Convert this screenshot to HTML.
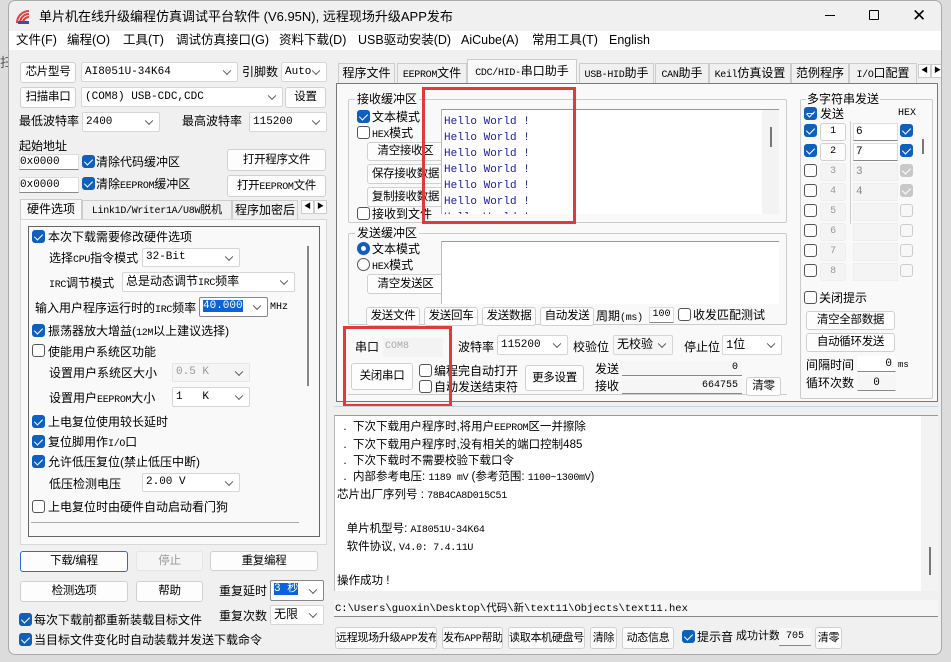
<!DOCTYPE html>
<html><head><meta charset="utf-8"><style>
*{box-sizing:border-box;margin:0;padding:0}
body{width:951px;height:662px;overflow:hidden;background:#dcdcdc;font:12px "Liberation Sans","Noto Sans CJK SC",sans-serif;color:#000;position:relative}
.a{position:absolute;white-space:nowrap;line-height:1}
.win{position:absolute;left:8px;top:0;width:934px;height:655px;background:#f0f0f0;border:1px solid #aaa;border-radius:7px;overflow:hidden}
.btn{position:absolute;background:#fdfdfd;border:1px solid #d0d0d0;border-radius:3px;text-align:center;white-space:nowrap;font-size:11.5px;letter-spacing:-0.3px;overflow:hidden}
.cmb{position:absolute;background:#fff;border:1px solid #d6d6d6;border-radius:2px;font:11px "Liberation Mono","Noto Sans CJK SC",monospace;padding-left:3px;white-space:nowrap}
.cmb:after{content:"";position:absolute;right:7px;top:50%;width:5px;height:5px;border-right:1px solid #555;border-bottom:1px solid #555;transform:translateY(-70%) rotate(45deg)}
.cb{position:absolute;width:13px;height:13px;border:1px solid #555;border-radius:3px;background:#fff}
.cb.on{background:#0f5fbd;border-color:#0f5fbd}
.cb.on:after{content:"";position:absolute;left:3px;top:1px;width:4px;height:7px;border-right:1.5px solid #fff;border-bottom:1.5px solid #fff;transform:rotate(45deg)}
.cb.dis{background:#c8c8c8;border-color:#c8c8c8}
.cb.dis:after{content:"";position:absolute;left:3px;top:1px;width:4px;height:7px;border-right:1.5px solid #fff;border-bottom:1.5px solid #fff;transform:rotate(45deg)}
.cb.lt{border-color:#ccc;background:#f7f7f7}
.inp{position:absolute;background:#fff;border:1px solid #ddd;border-bottom:1px solid #888;font:11px "Liberation Mono",monospace;white-space:nowrap}
.mono{font-family:"Liberation Mono","Noto Sans CJK SC",monospace}
i.m{font-style:normal;font-family:"Liberation Mono",monospace;font-size:10px;letter-spacing:-0.3px}
.grp{position:absolute;border:1px solid #c8d6e4;border-radius:2px}
.red{position:absolute;border:3px solid #e03a3a}
.tab{position:absolute;height:20px;border:1px solid #ccc;border-bottom:none;background:#f0f0f0;text-align:center;line-height:19px;white-space:nowrap;overflow:hidden}
</style></head><body>
<div class="a" style="left:0;top:56px;font-size:13px;color:#555">扫</div>
<div class="win">
 <svg class="a" style="left:6px;top:8px" width="16" height="16" viewBox="0 0 16 16"><path d="M2 14 A12 12 0 0 1 14 2" stroke="#e04040" stroke-width="2" fill="none"/><path d="M5 14 A9 9 0 0 1 14 5" stroke="#e04040" stroke-width="2" fill="none"/><path d="M8 14 A6 6 0 0 1 14 8" stroke="#e04040" stroke-width="2" fill="none"/><rect x="3" y="12" width="11" height="3" fill="#3050c0"/></svg>
 <div class="a" style="left:30px;top:9px;font-size:13px">单片机在线升级编程仿真调试平台软件 (V6.95N), 远程现场升级APP发布</div>
 <div class="a" style="left:816px;top:14px;width:10px;border-top:1px solid #000"></div>
 <div class="a" style="left:860px;top:9px;width:10px;height:10px;border:1px solid #000;border-radius:1px"></div>
 <div class="a" style="left:903px;top:6px;font-size:17px">✕</div>
 <div class="a" style="left:0;top:30px;width:934px;height:19px;background:#fff"></div>
 <div class="a" style="left:7px;top:33px;font-size:12.5px">文件(F)</div>
 <div class="a" style="left:58px;top:33px;font-size:12.5px">编程(O)</div>
 <div class="a" style="left:114px;top:33px;font-size:12.5px">工具(T)</div>
 <div class="a" style="left:167px;top:33px;font-size:12.5px">调试仿真接口(G)</div>
 <div class="a" style="left:270px;top:33px;font-size:12.5px">资料下载(D)</div>
 <div class="a" style="left:349px;top:33px;font-size:12.5px">USB驱动安装(D)</div>
 <div class="a" style="left:452px;top:33px;font-size:12.5px">AiCube(A)</div>
 <div class="a" style="left:523px;top:33px;font-size:12.5px">常用工具(T)</div>
 <div class="a" style="left:600px;top:33px;font-size:12.5px">English</div>

 <!-- LEFT -->
 <div class="btn" style="left:11px;top:61px;width:56px;height:21px;line-height:19px">芯片型号</div>
 <div class="cmb" style="left:72px;top:61px;width:157px;height:20px;line-height:18px">AI8051U-34K64</div>
 <div class="a" style="left:233px;top:65px">引脚数</div>
 <div class="cmb" style="left:272px;top:61px;width:46px;height:20px;line-height:18px">Auto</div>
 <div class="btn" style="left:11px;top:86px;width:56px;height:21px;line-height:19px">扫描串口</div>
 <div class="cmb" style="left:72px;top:86px;width:202px;height:20px;line-height:18px">(COM8) USB-CDC,CDC</div>
 <div class="btn" style="left:276px;top:86px;width:41px;height:21px;line-height:19px">设置</div>
 <div class="a" style="left:10px;top:114px">最低波特率</div>
 <div class="cmb" style="left:73px;top:111px;width:78px;height:20px;line-height:18px">2400</div>
 <div class="a" style="left:173px;top:114px">最高波特率</div>
 <div class="cmb" style="left:240px;top:111px;width:78px;height:20px;line-height:18px">115200</div>
 <div class="a" style="left:10px;top:139px">起始地址</div>
 <div class="inp" style="left:10px;top:153px;width:60px;height:16px;line-height:14px">0x0000</div>
 <div class="cb on" style="left:73px;top:154px"></div><div class="a" style="left:87px;top:155px">清除代码缓冲区</div>
 <div class="btn" style="left:218px;top:148px;width:99px;height:22px;line-height:20px">打开程序文件</div>
 <div class="inp" style="left:10px;top:176px;width:60px;height:16px;line-height:14px">0x0000</div>
 <div class="cb on" style="left:73px;top:176px"></div><div class="a" style="left:87px;top:177px">清除<i class="m">EEPROM</i>缓冲区</div>
 <div class="btn" style="left:218px;top:174px;width:99px;height:22px;line-height:20px">打开<i class="m">EEPROM</i>文件</div>
 <div class="tab" style="left:11px;top:198px;width:62px;background:#f9f9f9;height:21px">硬件选项</div>
 <div class="tab" style="left:73px;top:199px;width:150px;font-size:11px"><i class="m">Link1D/Writer1A/U8W</i>脱机</div>
 <div class="tab" style="left:223px;top:199px;width:66px">程序加密后</div>
 <div class="a" style="left:292px;top:199px;width:13px;height:14px;border:1px solid #ccc;background:#fff;font-size:7px;text-align:center;line-height:12px">◀</div>
 <div class="a" style="left:305px;top:199px;width:13px;height:14px;border:1px solid #ccc;background:#fff;font-size:7px;text-align:center;line-height:12px">▶</div>
 <div class="a" style="left:11px;top:218px;width:307px;height:326px;border:1px solid #d8d8d8;background:#f9f9f9"></div>
 <div class="a" style="left:19px;top:225px;width:292px;height:311px;border:1px solid #666"></div>
 <div class="a" style="left:298px;top:245px;width:2px;height:140px;background:#888"></div>
 <div class="cb on" style="left:23px;top:229px"></div><div class="a" style="left:39px;top:230px">本次下载需要修改硬件选项</div>
 <div class="a" style="left:40px;top:251px">选择<i class="m">CPU</i>指令模式</div>
 <div class="cmb" style="left:133px;top:247px;width:98px;height:19px;line-height:17px">32-Bit</div>
 <div class="a" style="left:40px;top:276px"><i class="m">IRC</i>调节模式</div>
 <div class="cmb" style="left:113px;top:271px;width:173px;height:20px;line-height:18px;font-size:12px">总是动态调节<i class="m">IRC</i>频率</div>
 <div class="a" style="left:26px;top:301px">输入用户程序运行时的<i class="m">IRC</i>频率</div>
 <div class="cmb" style="left:190px;top:296px;width:69px;height:20px;line-height:16px;border-color:#888"><span style="background:#0a64d8;color:#fff">40.000</span></div>
 <div class="a mono" style="left:261px;top:302px;font-size:10px">MHz</div>
 <div class="cb on" style="left:23px;top:323px"></div><div class="a" style="left:39px;top:324px">振荡器放大增益(<i class="m">12M</i>以上建议选择)</div>
 <div class="cb" style="left:23px;top:343px"></div><div class="a" style="left:39px;top:345px">使能用户系统区功能</div>
 <div class="a" style="left:40px;top:366px">设置用户系统区大小</div>
 <div class="cmb" style="left:163px;top:362px;width:78px;height:19px;line-height:17px;color:#999;background:#f5f5f5;border-color:#e6e6e6">0.5 K</div>
 <div class="a" style="left:40px;top:391px">设置用户<i class="m">EEPROM</i>大小</div>
 <div class="cmb" style="left:163px;top:386px;width:78px;height:20px;line-height:18px">1&nbsp;&nbsp;&nbsp;K</div>
 <div class="cb on" style="left:23px;top:414px"></div><div class="a" style="left:39px;top:415px">上电复位使用较长延时</div>
 <div class="cb on" style="left:23px;top:434px"></div><div class="a" style="left:39px;top:435px">复位脚用作<i class="m">I/O</i>口</div>
 <div class="cb on" style="left:23px;top:454px"></div><div class="a" style="left:39px;top:455px">允许低压复位(禁止低压中断)</div>
 <div class="a" style="left:40px;top:477px">低压检测电压</div>
 <div class="cmb" style="left:133px;top:472px;width:98px;height:19px;line-height:17px">2.00 V</div>
 <div class="cb" style="left:23px;top:499px"></div><div class="a" style="left:39px;top:500px">上电复位时由硬件自动启动看门狗</div>
 <div class="a" style="left:22px;top:521px;width:268px;border-top:1px solid #aaa"></div>
 <div class="btn" style="left:11px;top:550px;width:108px;height:21px;line-height:19px;border-color:#2a6fc9">下载/编程</div>
 <div class="btn" style="left:127px;top:550px;width:67px;height:20px;line-height:18px;color:#999;background:#f5f5f5;border-color:#e5e5e5">停止</div>
 <div class="btn" style="left:201px;top:550px;width:108px;height:20px;line-height:18px">重复编程</div>
 <div class="btn" style="left:11px;top:580px;width:108px;height:21px;line-height:19px">检测选项</div>
 <div class="btn" style="left:127px;top:580px;width:67px;height:21px;line-height:19px">帮助</div>
 <div class="a" style="left:210px;top:584px">重复延时</div>
 <div class="cmb" style="left:261px;top:579px;width:54px;height:21px;line-height:17px;border-color:#888"><span style="background:#0a64d8;color:#fff">3 秒</span></div>
 <div class="a" style="left:210px;top:609px">重复次数</div>
 <div class="cmb" style="left:261px;top:604px;width:54px;height:20px;line-height:18px;font-size:12px">无限</div>
 <div class="cb on" style="left:10px;top:612px"></div><div class="a" style="left:25px;top:613px">每次下载前都重新装载目标文件</div>
 <div class="cb on" style="left:10px;top:632px"></div><div class="a" style="left:25px;top:633px">当目标文件变化时自动装载并发送下载命令</div>

 <!-- RIGHT tabs -->
 <div class="tab" style="left:329px;top:62px;width:57px">程序文件</div>
 <div class="tab" style="left:388px;top:62px;width:70px"><i class="m">EEPROM</i>文件</div>
 <div class="tab" style="left:458px;top:58px;width:110px;height:25px;background:#f9f9f9;line-height:22px"><i class="m">CDC/HID-</i>串口助手</div>
 <div class="tab" style="left:570px;top:62px;width:75px"><i class="m">USB-HID</i>助手</div>
 <div class="tab" style="left:646px;top:62px;width:54px"><i class="m">CAN</i>助手</div>
 <div class="tab" style="left:700px;top:62px;width:82px"><i class="m">Keil</i>仿真设置</div>
 <div class="tab" style="left:782px;top:62px;width:58px">范例程序</div>
 <div class="tab" style="left:840px;top:62px;width:68px"><i class="m">I/O</i>口配置</div>
 <div class="a" style="left:909px;top:63px;width:13px;height:14px;border:1px solid #ccc;background:#fff;font-size:7px;text-align:center;line-height:12px">◀</div>
 <div class="a" style="left:922px;top:63px;width:13px;height:14px;border:1px solid #ccc;background:#fff;font-size:7px;text-align:center;line-height:12px">▶</div>
 <div class="a" style="left:327px;top:82px;width:602px;height:319px;border:1px solid #777;background:#f9f9f9"></div>
 <div class="grp" style="left:339px;top:98px;width:439px;height:124px;border-color:#ccc"></div>
 <div class="a" style="left:346px;top:92px;background:#f9f9f9;padding:0 2px">接收缓冲区</div>
 <div class="cb on" style="left:348px;top:109px"></div><div class="a" style="left:363px;top:110px">文本模式</div>
 <div class="cb" style="left:348px;top:125px"></div><div class="a" style="left:363px;top:126px"><i class="m">HEX</i>模式</div>
 <div class="btn" style="left:358px;top:141px;width:77px;height:19px;line-height:17px">清空接收区</div>
 <div class="btn" style="left:358px;top:163px;width:77px;height:20px;line-height:18px">保存接收数据</div>
 <div class="btn" style="left:358px;top:186px;width:77px;height:20px;line-height:18px">复制接收数据</div>
 <div class="cb" style="left:348px;top:206px"></div><div class="a" style="left:363px;top:207px">接收到文件</div>
 <div class="a" style="left:432px;top:108px;width:338px;height:105px;background:#fff;border-top:1px solid #999;border-left:1px solid #bbb;overflow:hidden">
  <div class="a mono" style="left:2px;top:4px;color:#1a1aa8;font-size:11px;line-height:16px;white-space:pre">Hello World !
Hello World !
Hello World !
Hello World !
Hello World !
Hello World !
Hello World !</div>
  <div class="a" style="left:320px;top:0;width:17px;height:105px;background:#f3f3f3"></div>
  <div class="a" style="left:328px;top:17px;width:2px;height:20px;background:#777"></div>
 </div>
 <div class="red" style="left:413px;top:86px;width:154px;height:137px"></div>
 <div class="grp" style="left:339px;top:232px;width:439px;height:92px;border-color:#ccc"></div>
 <div class="a" style="left:346px;top:226px;background:#f9f9f9;padding:0 2px">发送缓冲区</div>
 <div class="a" style="left:348px;top:241px;width:13px;height:13px;border-radius:50%;background:#0f5fbd"><div style="position:absolute;left:4px;top:4px;width:5px;height:5px;border-radius:50%;background:#fff"></div></div>
 <div class="a" style="left:363px;top:242px">文本模式</div>
 <div class="a" style="left:348px;top:257px;width:13px;height:13px;border-radius:50%;border:1px solid #555;background:#fff"></div>
 <div class="a" style="left:363px;top:258px"><i class="m">HEX</i>模式</div>
 <div class="btn" style="left:358px;top:273px;width:77px;height:20px;line-height:18px">清空发送区</div>
 <div class="a" style="left:432px;top:240px;width:338px;height:63px;background:#fff;border-top:1px solid #999;border-left:1px solid #bbb"></div>
 <div class="btn" style="left:357px;top:306px;width:54px;height:19px;line-height:17px">发送文件</div>
 <div class="btn" style="left:415px;top:306px;width:54px;height:19px;line-height:17px">发送回车</div>
 <div class="btn" style="left:473px;top:306px;width:54px;height:19px;line-height:17px">发送数据</div>
 <div class="btn" style="left:531px;top:306px;width:54px;height:19px;line-height:17px">自动发送</div>
 <div class="a" style="left:587px;top:309px">周期<i class="m">(ms)</i></div>
 <div class="inp" style="left:640px;top:306px;width:25px;height:16px;line-height:14px;text-align:center;font-size:10px">100</div>
 <div class="cb" style="left:669px;top:307px"></div><div class="a" style="left:684px;top:308px">收发匹配测试</div>
 <div class="a" style="left:339px;top:393px;width:439px;border-top:1px solid #ccc"></div>
 <div class="a" style="left:346px;top:340px">串口</div>
 <div class="a mono" style="left:374px;top:337px;width:60px;height:19px;background:#f3f3f3;color:#aaa;font-size:10px;line-height:18px;padding-left:2px">COM8</div>
 <div class="a" style="left:449px;top:340px">波特率</div>
 <div class="cmb" style="left:488px;top:334px;width:71px;height:20px;line-height:18px">115200</div>
 <div class="a" style="left:564px;top:340px">校验位</div>
 <div class="cmb" style="left:604px;top:334px;width:60px;height:20px;line-height:18px;font-size:12px;background:#f7f7f7">无校验</div>
 <div class="a" style="left:675px;top:340px">停止位</div>
 <div class="cmb" style="left:713px;top:334px;width:60px;height:20px;line-height:18px;font-size:12px">1位</div>
 <div class="btn" style="left:342px;top:362px;width:62px;height:27px;line-height:25px">关闭串口</div>
 <div class="cb" style="left:410px;top:363px"></div><div class="a" style="left:425px;top:364px">编程完自动打开</div>
 <div class="cb" style="left:410px;top:379px"></div><div class="a" style="left:425px;top:380px">自动发送结束符</div>
 <div class="btn" style="left:516px;top:364px;width:59px;height:26px;line-height:24px">更多设置</div>
 <div class="a" style="left:586px;top:362px">发送</div>
 <div class="a" style="left:586px;top:379px">接收</div>
 <div class="a mono" style="left:613px;top:360px;width:120px;height:15px;border-bottom:1px solid #888;background:#f6f6f6;text-align:right;font-size:10px;line-height:14px;padding-right:4px">0</div>
 <div class="a mono" style="left:613px;top:377px;width:120px;height:16px;border-bottom:1px solid #888;background:#f6f6f6;text-align:right;font-size:10px;line-height:15px;padding-right:4px">664755</div>
 <div class="btn" style="left:737px;top:376px;width:35px;height:19px;line-height:17px">清零</div>
 <div class="red" style="left:334px;top:325px;width:109px;height:81px"></div>
 <!-- multi string -->
 <div class="grp" style="left:791px;top:98px;width:133px;height:300px;border-color:#ccc"></div>
 <div class="a" style="left:797px;top:92px;background:#f9f9f9;padding:0 1px">多字符串发送</div>
 <div class="cb on" style="left:795px;top:106px"></div>
 <div class="a" style="left:798px;top:112px;width:7px;border-top:1.5px solid #fff"></div>
 <div class="a" style="left:811px;top:107px">发送</div>
 <div class="a mono" style="left:889px;top:108px;font-size:10px">HEX</div>
 <div class="a" style="left:841px;top:120px;height:103px;border-left:1px solid #ccc"></div>
 <div class="a" style="left:913px;top:138px;width:2px;height:15px;background:#777"></div>
 <div class="cb on" style="left:795px;top:123px"></div><div class="btn mono" style="left:811px;top:122px;width:26px;height:18px;line-height:16px;font-size:10px">1</div><div class="inp" style="left:844px;top:122px;width:45px;height:18px;line-height:16px;padding-left:2px">6</div><div class="cb on" style="left:891px;top:123px"></div>
 <div class="cb on" style="left:795px;top:143px"></div><div class="btn mono" style="left:811px;top:142px;width:26px;height:18px;line-height:16px;font-size:10px">2</div><div class="inp" style="left:844px;top:142px;width:45px;height:18px;line-height:16px;padding-left:2px">7</div><div class="cb on" style="left:891px;top:143px"></div>
 <div class="cb" style="left:795px;top:163px"></div><div class="btn mono" style="left:811px;top:162px;width:26px;height:18px;line-height:16px;font-size:10px;color:#999;background:#f4f4f4;border-color:#eee">3</div><div class="inp" style="left:844px;top:162px;width:45px;height:18px;line-height:16px;padding-left:2px;color:#888;background:#f4f4f4;border-color:#eee">3</div><div class="cb dis" style="left:891px;top:163px"></div>
 <div class="cb" style="left:795px;top:183px"></div><div class="btn mono" style="left:811px;top:182px;width:26px;height:18px;line-height:16px;font-size:10px;color:#999;background:#f4f4f4;border-color:#eee">4</div><div class="inp" style="left:844px;top:182px;width:45px;height:18px;line-height:16px;padding-left:2px;color:#888;background:#f4f4f4;border-color:#eee">4</div><div class="cb dis" style="left:891px;top:183px"></div>
 <div class="cb" style="left:795px;top:203px"></div><div class="btn mono" style="left:811px;top:202px;width:26px;height:18px;line-height:16px;font-size:10px;color:#999;background:#f4f4f4;border-color:#eee">5</div><div class="inp" style="left:844px;top:202px;width:45px;height:18px;background:#f4f4f4;border-color:#eee"></div><div class="cb lt" style="left:891px;top:203px"></div>
 <div class="cb" style="left:795px;top:223px"></div><div class="btn mono" style="left:811px;top:222px;width:26px;height:18px;line-height:16px;font-size:10px;color:#999;background:#f4f4f4;border-color:#eee">6</div><div class="inp" style="left:844px;top:222px;width:45px;height:18px;background:#f4f4f4;border-color:#eee"></div><div class="cb lt" style="left:891px;top:223px"></div>
 <div class="cb" style="left:795px;top:243px"></div><div class="btn mono" style="left:811px;top:242px;width:26px;height:18px;line-height:16px;font-size:10px;color:#999;background:#f4f4f4;border-color:#eee">7</div><div class="inp" style="left:844px;top:242px;width:45px;height:18px;background:#f4f4f4;border-color:#eee"></div><div class="cb lt" style="left:891px;top:243px"></div>
 <div class="cb" style="left:795px;top:263px"></div><div class="btn mono" style="left:811px;top:262px;width:26px;height:18px;line-height:16px;font-size:10px;color:#999;background:#f4f4f4;border-color:#eee">8</div><div class="inp" style="left:844px;top:262px;width:45px;height:18px;background:#f4f4f4;border-color:#eee"></div><div class="cb lt" style="left:891px;top:263px"></div>
 <div class="cb" style="left:795px;top:290px"></div><div class="a" style="left:810px;top:291px">关闭提示</div>
 <div class="btn" style="left:797px;top:310px;width:89px;height:19px;line-height:17px">清空全部数据</div>
 <div class="btn" style="left:797px;top:332px;width:89px;height:19px;line-height:17px">自动循环发送</div>
 <div class="a" style="left:797px;top:358px">间隔时间</div>
 <div class="inp" style="left:848px;top:355px;width:39px;height:16px;line-height:14px;text-align:right;padding-right:3px;border-color:#fff #fff #888">0</div>
 <div class="a mono" style="left:889px;top:360px;font-size:9px">ms</div>
 <div class="a" style="left:797px;top:376px">循环次数</div>
 <div class="inp" style="left:848px;top:374px;width:39px;height:16px;line-height:14px;text-align:center;background:#f6f6f6;border-color:#f6f6f6 #f6f6f6 #888">0</div>
 <!-- log -->
 <div class="a" style="left:325px;top:405px;width:604px;border-top:1px solid #c8d6e4"></div>
 <div class="a" style="left:325px;top:414px;width:604px;height:176px;background:#fff;border-top:1px solid #999;border-left:1px solid #bbb;overflow:hidden">
  <div class="a" style="left:2px;top:3px;font-size:11.5px;line-height:16px;white-space:pre">  .  下次下载用户程序时,将用户<i class="m">EEPROM</i>区一并擦除
  .  下次下载用户程序时,没有相关的端口控制485
  .  下次下载时不需要校验下载口令
  .  内部参考电压: <i class="m">1189 mV</i> (参考范围: <i class="m">1100~1300mV</i>)
芯片出厂序列号 : <i class="m">78B4CA8D015C51</i>

   单片机型号: <i class="m">AI8051U-34K64</i>
   软件协议, <i class="m">V4.0: 7.4.11U</i>

操作成功 !</div>
  <div class="a" style="left:586px;top:0;width:17px;height:176px;background:#f3f3f3"></div>
  <div class="a" style="left:594px;top:131px;width:2px;height:28px;background:#777"></div>
 </div>
 <div class="a mono" style="left:325px;top:599px;width:604px;height:17px;background:#f6f6f6;border-bottom:1px solid #888;font-size:10.5px;line-height:16px;padding-left:1px">C:\Users\guoxin\Desktop\<span style="font-family:'Noto Sans CJK SC'">代码</span>\<span style="font-family:'Noto Sans CJK SC'">新</span>\text11\Objects\text11.hex</div>
 <div class="btn" style="left:326px;top:626px;width:102px;height:22px;line-height:20px;font-size:11px">远程现场升级<i class="m">APP</i>发布</div>
 <div class="btn" style="left:433px;top:626px;width:61px;height:22px;line-height:20px;font-size:11px">发布<i class="m">APP</i>帮助</div>
 <div class="btn" style="left:499px;top:626px;width:77px;height:22px;line-height:20px;font-size:11px">读取本机硬盘号</div>
 <div class="btn" style="left:581px;top:626px;width:27px;height:22px;line-height:20px;font-size:11px">清除</div>
 <div class="btn" style="left:613px;top:626px;width:52px;height:22px;line-height:20px;font-size:11px">动态信息</div>
 <div class="cb on" style="left:673px;top:629px"></div><div class="a" style="left:688px;top:630px">提示音</div>
 <div class="a" style="left:727px;top:630px;font-size:11px">成功计数</div>
 <div class="a mono" style="left:770px;top:627px;width:32px;height:18px;background:#f6f6f6;border-bottom:1px solid #888;text-align:center;font-size:10px;line-height:17px">705</div>
 <div class="btn" style="left:806px;top:626px;width:27px;height:22px;line-height:20px;font-size:11px">清零</div>
</div>
</body></html>
